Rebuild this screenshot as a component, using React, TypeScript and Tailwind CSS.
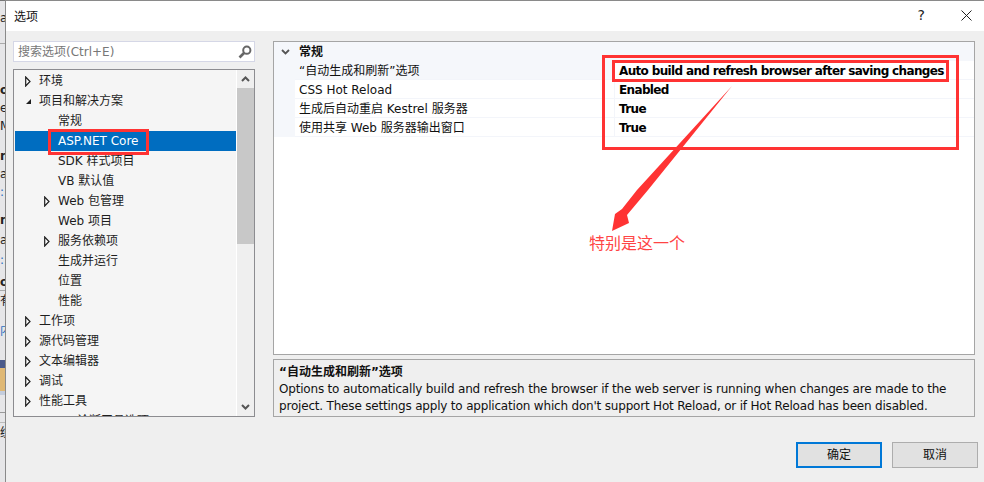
const font = '[font-family:"DejaVu_Sans","Noto_Sans_CJK_SC",sans-serif]';

type TreeItem = { label: string; level: number; arrow?: 'closed' | 'open'; selected?: boolean };

const treeItems: TreeItem[] = [
  { label: '环境', level: 0, arrow: 'closed' },
  { label: '项目和解决方案', level: 0, arrow: 'open' },
  { label: '常规', level: 1 },
  { label: 'ASP.NET Core', level: 1, selected: true },
  { label: 'SDK 样式项目', level: 1 },
  { label: 'VB 默认值', level: 1 },
  { label: 'Web 包管理', level: 1, arrow: 'closed' },
  { label: 'Web 项目', level: 1 },
  { label: '服务依赖项', level: 1, arrow: 'closed' },
  { label: '生成并运行', level: 1 },
  { label: '位置', level: 1 },
  { label: '性能', level: 1 },
  { label: '工作项', level: 0, arrow: 'closed' },
  { label: '源代码管理', level: 0, arrow: 'closed' },
  { label: '文本编辑器', level: 0, arrow: 'closed' },
  { label: '调试', level: 0, arrow: 'closed' },
  { label: '性能工具', level: 0, arrow: 'closed' },
  { label: '诊断工具选项', level: 2 },
];

const rows = [
  { name: '“自动生成和刷新”选项', value: 'Auto build and refresh browser after saving changes' },
  { name: 'CSS Hot Reload', value: 'Enabled' },
  { name: '生成后自动重启 Kestrel 服务器', value: 'True' },
  { name: '使用共享 Web 服务器输出窗口', value: 'True' },
];

function TreeArrow({ open }: { open?: boolean }) {
  if (open) {
    return (
      <svg width="7" height="7" viewBox="0 0 7 7">
        <path d="M6 1V6H1Z" fill="#1e1e1e" />
      </svg>
    );
  }
  return (
    <svg width="6" height="11" viewBox="0 0 6 11">
      <path d="M0.7 1V10L5 5.5Z" fill="#fff" stroke="#1e1e1e" strokeWidth="1.2" />
    </svg>
  );
}

function TreeRow({ item }: { item: TreeItem }) {
  const textLeft = item.level === 0 ? 'w-[24px]' : item.level === 1 ? 'w-[43px]' : 'w-[62px]';
  const arrowPad = item.level === 0 ? 'pl-[10px]' : 'pl-[29px]';
  return (
    <div className={`flex h-5 shrink-0 items-center ${item.selected ? 'bg-[#006dc0] text-white' : 'text-[#1e1e1e]'}`}>
      <div className={`flex shrink-0 items-center ${textLeft} ${arrowPad}`}>
        {item.arrow && <TreeArrow open={item.arrow === 'open'} />}
      </div>
      <span className="whitespace-nowrap">{item.label}</span>
    </div>
  );
}

function Strip() {
  return (
    <div className={`flex h-full w-[5px] shrink-0 flex-col overflow-hidden bg-[#e6e6e8] text-[12px] leading-[20px] text-[#222] ${font}`}>
      <div className="h-[1px] shrink-0 bg-[#777]" />
      <div className="h-[43px] shrink-0 border-b border-[#aaa] pt-[7px]">a</div>
      <div className="h-[36px] shrink-0" />
      <div className="h-[18px] shrink-0 font-bold">o</div>
      <div className="h-[18px] shrink-0">e</div>
      <div className="h-[30px] shrink-0">M</div>
      <div className="h-[18px] shrink-0 font-bold">n</div>
      <div className="h-[18px] shrink-0">a</div>
      <div className="h-[28px] shrink-0 text-[#2a6fc0]">:</div>
      <div className="h-[20px] shrink-0 font-bold">n</div>
      <div className="h-[20px] shrink-0">a</div>
      <div className="h-[22px] shrink-0 text-[#2a6fc0]">:</div>
      <div className="h-[19px] shrink-0 border-b border-[#aaa] font-bold">o</div>
      <div className="h-[30px] shrink-0">有</div>
      <div className="h-[39px] shrink-0 text-[#2a6fc0]">内</div>
      <div className="h-[8px] shrink-0 bg-[#4a5a8c]" />
      <div className="h-[23px] shrink-0 bg-[#dfb875]" />
      <div className="h-[4px] shrink-0 bg-[#c4cddd]" />
      <div className="h-[18px] shrink-0 border-b border-[#999]" />
      <div className="h-[10px] shrink-0 border-b border-[#bbb]" />
      <div className="flex-1">统</div>
    </div>
  );
}

function ChevronIcon({ up }: { up?: boolean }) {
  return (
    <svg width="9" height="6" viewBox="0 0 9 6">
      <path d={up ? 'M1 5L4.5 1.5L8 5' : 'M1 1L4.5 4.5L8 1'} fill="none" stroke="#555" strokeWidth="2" />
    </svg>
  );
}

export default function App() {
  return (
    <div className={`relative flex h-[482px] w-[984px] overflow-hidden bg-white text-[12px] ${font}`}>
      <Strip />

      <div className="flex min-w-0 flex-1 flex-col border-t border-l border-[#8a8a8a] bg-[#efefef]">
        <header className="flex h-[30px] shrink-0 items-center justify-between bg-white pr-[12px] pl-[8px]">
          <span className="pt-[1px] text-[12px] text-[#111]">选项</span>
          <div className="flex items-center gap-[36px]">
            <span className="mb-[2px] text-[14px] leading-[14px] text-[#222]">?</span>
            <svg className="mb-[2px]" width="11" height="11" viewBox="0 0 11 11">
              <path d="M0.5 0.5L10.5 10.5M10.5 0.5L0.5 10.5" stroke="#222" strokeWidth="1" />
            </svg>
          </div>
        </header>

        <div className="flex gap-[18px] pt-[10px] pl-[7px]">
          {/* left column */}
          <div className="flex w-[242px] shrink-0 flex-col gap-[7px]">
            <div className="flex h-[21px] items-center justify-between border border-[#d5d7e6] bg-white pr-[2px] pl-[4px] text-[#777]">
              <span>搜索选项(Ctrl+E)</span>
              <svg width="14" height="14" viewBox="0 0 14 14">
                <circle cx="8.8" cy="5.2" r="3.6" fill="none" stroke="#666" strokeWidth="2" />
                <path d="M6 8L1.5 12.5" stroke="#666" strokeWidth="2.6" />
              </svg>
            </div>
            <div className="flex h-[348px] overflow-hidden border border-[#8c8c90] bg-[#f5f5f5]">
              <div className="flex min-w-0 flex-1 flex-col overflow-hidden pt-px pl-px">
                {treeItems.map((item) => (
                  <TreeRow key={item.label} item={item} />
                ))}
              </div>
              <div className="flex w-[18px] shrink-0 flex-col border-l border-white bg-[#efefef]">
                <div className="flex h-[18px] shrink-0 items-center justify-center">
                  <ChevronIcon up />
                </div>
                <div className="h-[156px] shrink-0 bg-[#c8c8c8]" />
                <div className="flex-1" />
                <div className="flex h-[18px] shrink-0 items-center justify-center">
                  <ChevronIcon />
                </div>
              </div>
            </div>
          </div>

          {/* right column */}
          <div className="flex w-[702px] shrink-0 flex-col gap-[4px]">
            <div className="h-[314px] border border-[#a5a5a5] bg-white text-[#111]">
              <div className="flex h-[19px] items-center bg-[#f5f7fb]">
                <div className="flex w-[25px] shrink-0 justify-center pr-[3px]">
                  <svg width="9" height="6" viewBox="0 0 9 6">
                    <path d="M1 1L4.5 4.5L8 1" fill="none" stroke="#555" strokeWidth="1.8" />
                  </svg>
                </div>
                <span className="font-bold">常规</span>
              </div>
              {rows.map((row, i) => (
                <div key={row.name} className="flex h-[19px]">
                  <div className="w-[21px] shrink-0 bg-[#f5f7fb]" />
                  <div className={`flex w-[320px] shrink-0 items-center border-r border-b border-[#f3f5fa] pt-[2px] pl-[4px] ${i === 0 ? 'bg-[#f5f7fb]' : ''}`}>
                    {row.name}
                  </div>
                  <div className="flex flex-1 items-center border-b border-[#f3f5fa] pt-[2px] pl-[4px] font-bold tracking-[-0.65px] whitespace-nowrap text-black">
                    {row.value}
                  </div>
                </div>
              ))}
            </div>
            <div className="flex h-[58px] flex-col border border-[#a5a5a5] px-[5px] pt-[3px] text-[#111]">
              <span className="h-[18px] font-bold">“自动生成和刷新”选项</span>
              <p className="leading-[17px] tracking-[-0.19px]">
                Options to automatically build and refresh the browser if the web server is running when changes are made to the project. These settings apply to application which don't support Hot Reload, or if Hot Reload has been disabled.
              </p>
            </div>
          </div>
        </div>

        <footer className="mt-[25px] flex justify-end gap-[10px] pr-[6px]">
          <button className="flex h-[26px] w-[86px] items-center justify-center border-2 border-[#0078d7] bg-[#e1e1e1] text-[#111]">确定</button>
          <button className="flex h-[26px] w-[86px] items-center justify-center border border-[#adadad] bg-[#e1e1e1] text-[#111]">取消</button>
        </footer>
      </div>

      {/* red annotations drawn on top of the screenshot */}
      <div className="absolute top-[129px] left-[48px] h-[26px] w-[101px] border-[3px] border-[#f33]" />
      <div className="absolute top-[55px] left-[602px] h-[95px] w-[357px] border-[3px] border-[#f33]" />
      <div className="absolute top-[60px] left-[612px] h-[22px] w-[337px] border-[3px] border-[#f33]" />
      <svg className="absolute top-0 left-0" width="984" height="482" viewBox="0 0 984 482">
        <polygon points="732,86 648,190 627,215 629,223 612,231 615,214 622,209 637,190" fill="#f33" />
      </svg>
      <span className="absolute top-[234px] left-[589px] text-[16px] leading-[20px] text-[#f44]">特别是这一个</span>
    </div>
  );
}
